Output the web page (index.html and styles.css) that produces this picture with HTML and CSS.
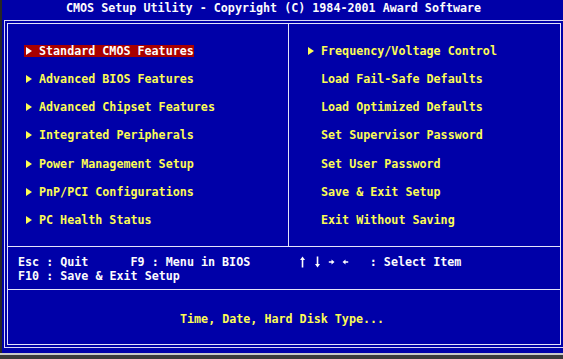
FILE: index.html
```html
<!DOCTYPE html>
<html>
<head>
<meta charset="utf-8">
<title>CMOS Setup Utility</title>
<link rel="stylesheet" href="styles.css">
</head>
<body>
<div class="screen">
  <div class="title">CMOS Setup Utility - Copyright (C) 1984-2001 Award Software</div>
  <div class="frame">
    <div class="box">
      <div class="menu">
        <ul class="col col-left">
          <li class="item"><span class="entry sel"><span class="tri"></span>Standard CMOS Features</span></li>
          <li class="item"><span class="entry"><span class="tri"></span>Advanced BIOS Features</span></li>
          <li class="item"><span class="entry"><span class="tri"></span>Advanced Chipset Features</span></li>
          <li class="item"><span class="entry"><span class="tri"></span>Integrated Peripherals</span></li>
          <li class="item"><span class="entry"><span class="tri"></span>Power Management Setup</span></li>
          <li class="item"><span class="entry"><span class="tri"></span>PnP/PCI Configurations</span></li>
          <li class="item"><span class="entry"><span class="tri"></span>PC Health Status</span></li>
        </ul>
        <ul class="col col-right">
          <li class="item"><span class="entry"><span class="tri"></span>Frequency/Voltage Control</span></li>
          <li class="item"><span class="entry"><span class="tri none"></span>Load Fail-Safe Defaults</span></li>
          <li class="item"><span class="entry"><span class="tri none"></span>Load Optimized Defaults</span></li>
          <li class="item"><span class="entry"><span class="tri none"></span>Set Supervisor Password</span></li>
          <li class="item"><span class="entry"><span class="tri none"></span>Set User Password</span></li>
          <li class="item"><span class="entry"><span class="tri none"></span>Save &amp; Exit Setup</span></li>
          <li class="item"><span class="entry"><span class="tri none"></span>Exit Without Saving</span></li>
        </ul>
      </div>
      <div class="keys">
        <div class="keyline">Esc : Quit      F9 : Menu in BIOS       <span class="arrows"><svg class="arw" viewBox="0 0 7 12" aria-label="up"><path d="M3.5 0.5 L6 4 H4.3 V11.5 H2.7 V4 H1 Z"/></svg><span class="gap"></span><svg class="arw" viewBox="0 0 7 12" aria-label="down"><path d="M3.5 11.5 L6 8 H4.3 V0.5 H2.7 V8 H1 Z"/></svg><span class="gap"></span><svg class="arw" viewBox="0 0 7 12" aria-label="right"><path d="M6.5 6 L3.5 3.5 V5.2 H0.8 V6.8 H3.5 V8.5 Z"/></svg><span class="gap"></span><svg class="arw" viewBox="0 0 7 12" aria-label="left"><path d="M0.5 6 L3.5 3.5 V5.2 H6.2 V6.8 H3.5 V8.5 Z"/></svg></span>   : Select Item</div>
        <div class="keyline">F10 : Save &amp; Exit Setup</div>
      </div>
      <div class="help">Time, Date, Hard Disk Type...</div>
    </div>
  </div>
</div>
<div class="bezel"></div>
</body>
</html>
```

FILE: styles.css
```css
html, body {
  margin: 0;
  padding: 0;
  background: #0000a8;
}
body {
  width: 563px;
  height: 359px;
  overflow: hidden;
  font-family: "DejaVu Sans Mono", "Liberation Mono", monospace;
  font-weight: bold;
  font-size: 11.69px;
}
.screen {
  height: 353px;
  box-sizing: border-box;
  border-left: 2px solid #262626;
  padding-left: 2px;
  background: #0000a8;
}
.title {
  height: 20px;
  line-height: 16px;
  padding-left: 62px;
  color: #fcfcfc;
  white-space: pre;
}
.frame {
  height: 328px;
  box-sizing: border-box;
  border: 1px solid #d8d8f4;
  border-right: none;
  padding: 2px;
}
.box {
  height: 322px;
  box-sizing: border-box;
  border: 1px solid #e4e4fa;
  display: flex;
  flex-direction: column;
}
.menu {
  height: 223px;
  flex: none;
  box-sizing: border-box;
  border-bottom: 1px solid #e4e4fa;
  display: flex;
}
.col {
  list-style: none;
  margin: 0;
  padding: 12.7px 0 0 16px;
  box-sizing: border-box;
}
.col-left {
  width: 281px;
  border-right: 1px solid #e4e4fa;
}
.col-right {
  flex: 1;
  padding-left: 17px;
}
.item {
  height: 28.2px;
  display: flex;
  align-items: center;
  color: #fcfc54;
}
.entry {
  display: inline-flex;
  align-items: center;
  height: 12px;
  line-height: 12px;
  padding-left: 2px;
  white-space: pre;
}
.sel {
  background: #a80000;
  color: #fcfcfc;
}
.tri {
  width: 0;
  height: 0;
  border-left: 6px solid currentColor;
  border-top: 4.5px solid transparent;
  border-bottom: 4.5px solid transparent;
  margin-right: 7px;
}
.tri.none {
  visibility: hidden;
}
.keys {
  height: 43px;
  flex: none;
  box-sizing: border-box;
  border-bottom: 1px solid #e4e4fa;
  padding: 8px 0 0 10px;
  color: #fcfcfc;
}
.keyline {
  height: 14.1px;
  line-height: 14.1px;
  white-space: pre;
}
.arrows {
  display: inline-flex;
  vertical-align: top;
  height: 14.1px;
  align-items: center;
}
.arw {
  width: 7.04px;
  height: 12px;
  fill: #fcfcfc;
}
.gap {
  width: 7.04px;
}
.help {
  flex: 1;
  padding: 22px 0 0 172px;
  line-height: 14.1px;
  color: #fcfc54;
  white-space: pre;
}
.bezel {
  height: 6px;
  box-sizing: border-box;
  border-top: 2px solid #c8c8c8;
  background: #3a3a3a;
}
```
